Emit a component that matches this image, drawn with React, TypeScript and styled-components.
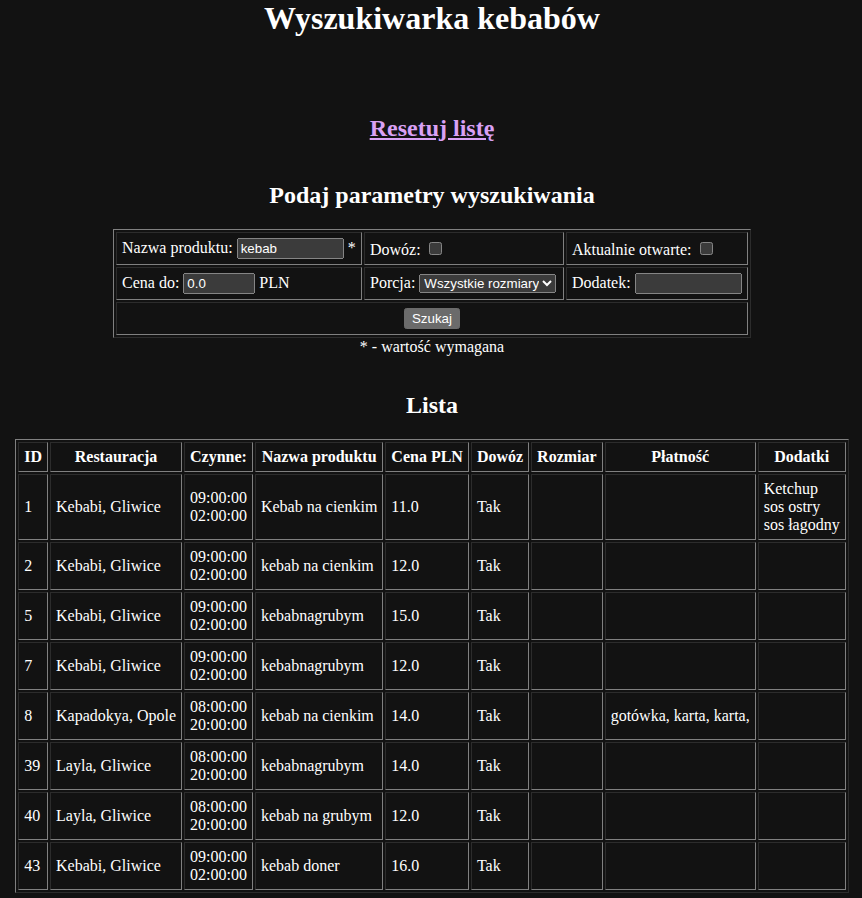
import React from "react";
import styled, { createGlobalStyle } from "styled-components";

const GlobalStyle = createGlobalStyle`
  :root { color-scheme: dark; }
  html, body { margin: 0; padding: 0; background: #121212; }
  body {
    color: #ffffff;
    font-family: "Liberation Serif", "Times New Roman", serif;
    font-size: 16px;
  }
`;

const Page = styled.main`
  display: flex;
  flex-direction: column;
  align-items: center;
  padding: 0 0 24px 2px;
`;

const Title = styled.h1`
  margin: 0;
  font-size: 32px;
  font-weight: bold;
  text-align: center;
`;

const Heading = styled.h2<{ $top: number; $bottom: number }>`
  margin: ${(p) => p.$top}px 0 ${(p) => p.$bottom}px;
  font-size: 24px;
  font-weight: bold;
  text-align: center;
`;

const ResetLink = styled.a`
  color: #d9a1f5;
  text-decoration: underline;
  cursor: pointer;
`;

const BorderTable = styled.table`
  border: 1px outset grey;
  border-collapse: separate;
  border-spacing: 2px;
  font-family: "Liberation Serif", "Times New Roman", serif;
  font-size: 16px;
  color: #ffffff;
`;

const SearchTable = styled(BorderTable)`
  width: 638px;
`;

const SearchCell = styled.td<{ $w?: number; $center?: boolean }>`
  border: 1px inset grey;
  padding: 5px;
  text-align: ${(p) => (p.$center ? "center" : "left")};
  vertical-align: middle;
  ${(p) => (p.$w ? `width: ${p.$w}px;` : "")}
`;

const TextInput = styled.input<{ $w: number }>`
  box-sizing: border-box;
  width: ${(p) => p.$w}px;
  font-family: "Liberation Sans", Arial, sans-serif;
  font-size: 13.3333px;
`;

const Check = styled.input`
  font-size: 13.3333px;
`;

const Select = styled.select`
  font-family: "Liberation Sans", Arial, sans-serif;
  font-size: 13.3333px;
`;

const Button = styled.button`
  font-family: "Liberation Sans", Arial, sans-serif;
  font-size: 13.3333px;
`;

const Note = styled.div`
  text-align: center;
  line-height: normal;
`;

const ListTable = styled(BorderTable)``;

const HeadCell = styled.th`
  border: 1px inset grey;
  padding: 5px;
  font-weight: bold;
  text-align: center;
  vertical-align: middle;
`;

const Cell = styled.td`
  border: 1px inset grey;
  padding: 5px;
  text-align: left;
  vertical-align: middle;
`;

const Lines = styled.span`
  display: inline;
`;

type Row = {
  id: number;
  place: string;
  open: [string, string];
  name: string;
  price: string;
  delivery: string;
  size: string;
  pay: string;
  extras: string[];
};

const rows: Row[] = [
  { id: 1, place: "Kebabi, Gliwice", open: ["09:00:00", "02:00:00"], name: "Kebab na cienkim", price: "11.0", delivery: "Tak", size: "", pay: "", extras: ["Ketchup", "sos ostry", "sos łagodny"] },
  { id: 2, place: "Kebabi, Gliwice", open: ["09:00:00", "02:00:00"], name: "kebab na cienkim", price: "12.0", delivery: "Tak", size: "", pay: "", extras: [] },
  { id: 5, place: "Kebabi, Gliwice", open: ["09:00:00", "02:00:00"], name: "kebabnagrubym", price: "15.0", delivery: "Tak", size: "", pay: "", extras: [] },
  { id: 7, place: "Kebabi, Gliwice", open: ["09:00:00", "02:00:00"], name: "kebabnagrubym", price: "12.0", delivery: "Tak", size: "", pay: "", extras: [] },
  { id: 8, place: "Kapadokya, Opole", open: ["08:00:00", "20:00:00"], name: "kebab na cienkim", price: "14.0", delivery: "Tak", size: "", pay: "gotówka, karta, karta,", extras: [] },
  { id: 39, place: "Layla, Gliwice", open: ["08:00:00", "20:00:00"], name: "kebabnagrubym", price: "14.0", delivery: "Tak", size: "", pay: "", extras: [] },
  { id: 40, place: "Layla, Gliwice", open: ["08:00:00", "20:00:00"], name: "kebab na grubym", price: "12.0", delivery: "Tak", size: "", pay: "", extras: [] },
  { id: 43, place: "Kebabi, Gliwice", open: ["09:00:00", "02:00:00"], name: "kebab doner", price: "16.0", delivery: "Tak", size: "", pay: "", extras: [] },
];

const headers = ["ID", "Restauracja", "Czynne:", "Nazwa produktu", "Cena PLN", "Dowóz", "Rozmiar", "Płatność", "Dodatki"];

function MultiLine({ items }: { items: string[] }) {
  return (
    <Lines>
      {items.map((t, i) => (
        <React.Fragment key={i}>
          {i > 0 && <br />}
          {t}
        </React.Fragment>
      ))}
    </Lines>
  );
}

export default function App() {
  return (
    <>
      <GlobalStyle />
      <Page>
        <Title>Wyszukiwarka kebabów</Title>
        <Heading $top={78} $bottom={0}>
          <ResetLink href="#">Resetuj listę</ResetLink>
        </Heading>
        <Heading $top={40} $bottom={20}>Podaj parametry wyszukiwania</Heading>
        <form onSubmit={(e) => e.preventDefault()}>
          <SearchTable>
            <tbody>
              <tr>
                <SearchCell $w={234}>
                  Nazwa produktu: <TextInput $w={107} type="text" defaultValue="kebab" /> *
                </SearchCell>
                <SearchCell $w={188}>
                  Dowóz: <Check type="checkbox" />
                </SearchCell>
                <SearchCell $w={170}>
                  Aktualnie otwarte: <Check type="checkbox" />
                </SearchCell>
              </tr>
              <tr>
                <SearchCell>
                  Cena do: <TextInput $w={72} type="text" defaultValue="0.0" /> PLN
                </SearchCell>
                <SearchCell>
                  Porcja:{" "}
                  <Select defaultValue="all">
                    <option value="all">Wszystkie rozmiary</option>
                    <option value="s">Mały</option>
                    <option value="m">Średni</option>
                    <option value="l">Duży</option>
                  </Select>
                </SearchCell>
                <SearchCell>
                  Dodatek: <TextInput $w={107} type="text" defaultValue="" />
                </SearchCell>
              </tr>
              <tr>
                <SearchCell colSpan={3} $center>
                  <Button type="submit">Szukaj</Button>
                </SearchCell>
              </tr>
            </tbody>
          </SearchTable>
        </form>
        <Note>* - wartość wymagana</Note>
        <Heading $top={36} $bottom={20}>Lista</Heading>
        <ListTable>
          <tbody>
            <tr>
              {headers.map((h) => (
                <HeadCell key={h}>{h}</HeadCell>
              ))}
            </tr>
            {rows.map((r) => (
              <tr key={r.id}>
                <Cell>{r.id}</Cell>
                <Cell>{r.place}</Cell>
                <Cell>
                  <MultiLine items={r.open} />
                </Cell>
                <Cell>{r.name}</Cell>
                <Cell>{r.price}</Cell>
                <Cell>{r.delivery}</Cell>
                <Cell>{r.size}</Cell>
                <Cell>{r.pay}</Cell>
                <Cell>
                  <MultiLine items={r.extras} />
                </Cell>
              </tr>
            ))}
          </tbody>
        </ListTable>
      </Page>
    </>
  );
}
